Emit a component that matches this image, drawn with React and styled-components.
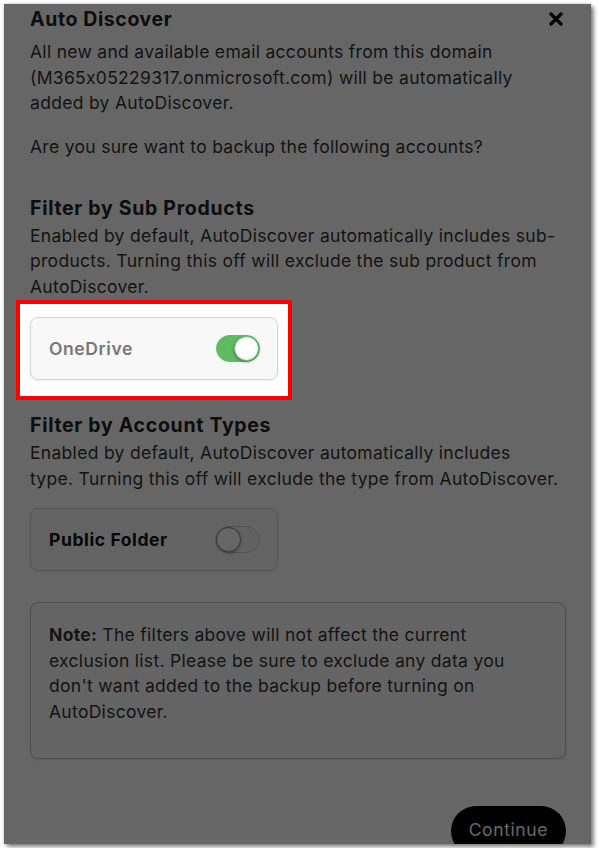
import React from "react";
import styled, { createGlobalStyle } from "styled-components";

const GlobalStyle = createGlobalStyle`
  html, body {
    margin: 0;
    padding: 0;
    background: #ffffff;
    font-family: Inter, "Open Sans", sans-serif;
    font-feature-settings: "calt" 0;
  }
  * {
    box-sizing: border-box;
  }
`;

const Frame = styled.div`
  position: relative;
  margin: 4px;
  width: 587px;
  height: 840px;
  overflow: hidden;
  background: #ffffff;
  box-shadow: 3px 3px 4px rgba(0, 0, 0, 0.45), 0 0 3px rgba(0, 0, 0, 0.25);
`;

const Overlay = styled.div`
  position: absolute;
  inset: 0;
  background: rgba(0, 0, 0, 0.6);
  z-index: 1;
  pointer-events: none;
`;

const Body = styled.div`
  padding: 3px 25px 0 26px;
  color: #333333;
  font-size: 17.5px;
  line-height: 25.5px;
  letter-spacing: 0.3px;
`;

const Header = styled.div`
  display: flex;
  justify-content: space-between;
  align-items: center;
  height: 24px;
`;

const Title = styled.h2`
  margin: 0;
  font-size: 19.5px;
  line-height: 24px;
  font-weight: 700;
  color: #222222;
  letter-spacing: 0.6px;
`;

const Close = styled.button`
  border: none;
  background: none;
  padding: 0;
  margin-right: 2px;
  width: 16px;
  height: 16px;
  display: flex;
  align-items: center;
  justify-content: center;
  color: #000000;
`;

const Text = styled.p`
  margin: ${({ $top }) => $top || 0}px 0 0 0;
`;

const SectionTitle = styled.h3`
  margin: ${({ $top }) => $top}px 0 3px 0;
  font-size: 19.5px;
  line-height: 24px;
  font-weight: 700;
  color: #222222;
  letter-spacing: 0.7px;
`;

const Spotlight = styled.div`
  position: relative;
  z-index: 2;
  margin: 1px 0 0 -14px;
  width: 276px;
  padding: 13px 10px 16px 10px;
  background: #ffffff;
  border: 4px solid #ff0000;
`;

const ToggleCard = styled.div`
  display: flex;
  align-items: center;
  justify-content: space-between;
  width: 248px;
  height: 63px;
  margin-top: ${({ $top }) => $top || 0}px;
  padding: 0 17px 0 18px;
  background: #f8f8f8;
  border: 1px solid #d6d6d6;
  border-radius: 8px;
  box-shadow: 0 1px 3px rgba(0, 0, 0, 0.08);
`;

const ToggleLabel = styled.span`
  font-size: 17.5px;
  letter-spacing: 0.6px;
  font-weight: ${({ $dark }) => ($dark ? 700 : 600)};
  color: ${({ $dark }) => ($dark ? "#111111" : "#777777")};
`;

const Track = styled.span`
  position: relative;
  display: inline-block;
  width: 44px;
  height: 27px;
  border-radius: 14px;
  background: ${({ $on }) => ($on ? "#5fba62" : "#f2f2f2")};
  border: 1px solid ${({ $on }) => ($on ? "#5fba62" : "#cfcfcf")};
`;

const Knob = styled.span`
  position: absolute;
  top: 0;
  left: ${({ $on }) => ($on ? "17px" : "-1px")};
  width: 25px;
  height: 25px;
  border-radius: 50%;
  background: #ffffff;
  border: 1px solid ${({ $on }) => ($on ? "#5fba62" : "#8a8a8a")};
  box-shadow: 0 1px 3px rgba(0, 0, 0, 0.35);
`;

const NoteBox = styled.div`
  margin-top: 31px;
  padding: 19px 30px 34px 18px;
  border: 1px solid #c4c4c4;
  border-radius: 8px;
  background: #f9f9f9;
  box-shadow: 0 1px 3px rgba(0, 0, 0, 0.08);
`;

const Footer = styled.div`
  display: flex;
  justify-content: flex-end;
  margin-top: 47px;
`;

const Continue = styled.button`
  height: 50px;
  padding: 0 18px 2px 18px;
  border: none;
  border-radius: 25px;
  background: #000000;
  color: #ffffff;
  font-family: Inter, "Open Sans", sans-serif;
  font-size: 17.5px;
  letter-spacing: 0.6px;
  line-height: 1;
`;

const Toggle = ({ on }) => (
  <Track $on={on}>
    <Knob $on={on} />
  </Track>
);

const CloseIcon = () => (
  <svg width="14" height="14" viewBox="0 0 14 14">
    <path d="M2 2 L12 12 M12 2 L2 12" stroke="currentColor" strokeWidth="3.2" strokeLinecap="round" />
  </svg>
);

const App = () => (
  <>
    <GlobalStyle />
    <Frame>
      <Overlay />
      <Body>
        <Header>
          <Title>Auto Discover</Title>
          <Close aria-label="Close">
            <CloseIcon />
          </Close>
        </Header>
        <Text $top={8}>
          All new and available email accounts from this domain
          (M365x05229317.onmicrosoft.com) will be automatically added by
          AutoDiscover.
        </Text>
        <Text $top={18.5}>Are you sure want to backup the following accounts?</Text>

        <SectionTitle $top={36}>Filter by Sub Products</SectionTitle>
        <Text>
          Enabled by default, AutoDiscover automatically includes sub-products.
          Turning this off will exclude the sub product from AutoDiscover.
        </Text>
        <Spotlight>
          <ToggleCard>
            <ToggleLabel>OneDrive</ToggleLabel>
            <Toggle on />
          </ToggleCard>
        </Spotlight>

        <SectionTitle $top={13}>Filter by Account Types</SectionTitle>
        <Text>
          Enabled by default, AutoDiscover automatically includes
          <br />
          type. Turning this off will exclude the type from AutoDiscover.
        </Text>
        <ToggleCard $top={17}>
          <ToggleLabel $dark>Public Folder</ToggleLabel>
          <Toggle on={false} />
        </ToggleCard>

        <NoteBox>
          <strong>Note:</strong> The filters above will not affect the current
          exclusion list. Please be sure to exclude any data you don't want added
          to the backup before turning on AutoDiscover.
        </NoteBox>

        <Footer>
          <Continue>Continue</Continue>
        </Footer>
      </Body>
    </Frame>
  </>
);

export default App;
